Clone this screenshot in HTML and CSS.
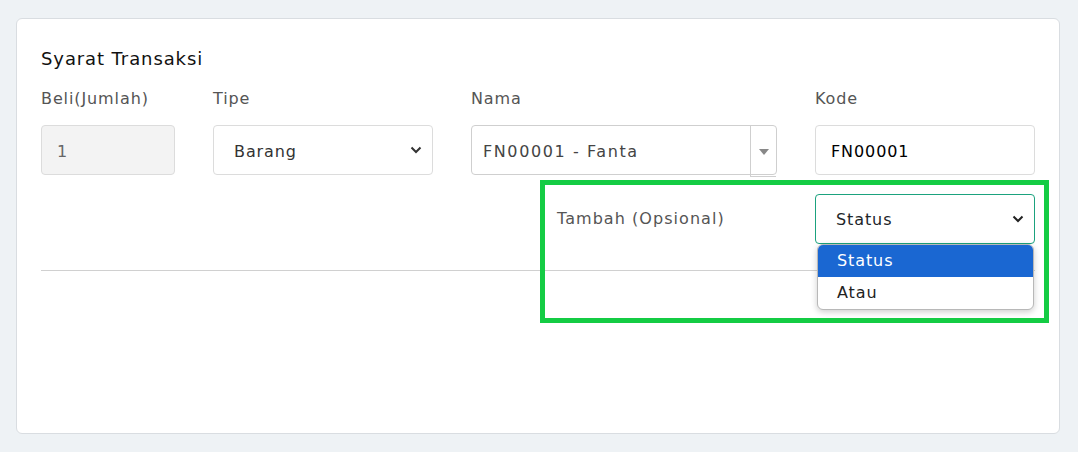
FILE: index.html
```html
<!DOCTYPE html>
<html lang="id">
<head>
<meta charset="utf-8">
<title>Syarat Transaksi</title>
<link rel="stylesheet" href="styles.css">
</head>
<body>
<div class="page">
  <div class="card">
    <h2 class="title">Syarat Transaksi</h2>
    <div class="fields">
      <div class="field">
        <div class="label">Beli(Jumlah)</div>
        <div class="control disabled">1</div>
      </div>
      <div class="field">
        <div class="label">Tipe</div>
        <div class="control select">
          <span class="value">Barang</span>
          <svg class="chev" width="12" height="8" viewBox="0 0 12 8"><path d="M1.5 1.5 L6 6 L10.5 1.5" fill="none" stroke="#333" stroke-width="2"/></svg>
        </div>
      </div>
      <div class="field">
        <div class="label">Nama</div>
        <div class="control select2">
          <span class="value">FN00001 - Fanta</span>
          <span class="s2arrow"><svg width="10" height="6" viewBox="0 0 10 6"><path d="M0 0 H10 L5 6 Z" fill="#888"/></svg></span>
        </div>
      </div>
      <div class="field">
        <div class="label">Kode</div>
        <div class="control code">FN00001</div>
      </div>
    </div>
    <div class="extra">
      <div class="extra-label">Tambah (Opsional)</div>
      <div class="extra-select">
        <div class="control select focus">
          <span class="value">Status</span>
          <svg class="chev" width="12" height="8" viewBox="0 0 12 8"><path d="M1.5 1.5 L6 6 L10.5 1.5" fill="none" stroke="#222" stroke-width="2"/></svg>
        </div>
        <ul class="dropdown">
          <li class="opt active">Status</li>
          <li class="opt">Atau</li>
        </ul>
      </div>
    </div>
    <hr class="divider">
  </div>
  <div class="highlight"></div>
</div>
</body>
</html>
```
FILE: styles.css
```css
* { box-sizing: border-box; }
html, body { margin: 0; padding: 0; }
body {
  background: #eef2f5;
  font-family: "DejaVu Sans", "Open Sans", sans-serif;
  width: 1078px;
  height: 452px;
  overflow: hidden;
}
.page { position: relative; padding: 18px 18px 0 16px; }
.card {
  background: #fff;
  border: 1px solid #d9dde1;
  border-radius: 6px;
  height: 416px;
  padding: 28px 24px 0 24px;
}
.title {
  margin: 0 0 16px 0;
  font-size: 18px;
  line-height: 24px;
  font-weight: normal;
  color: #111;
  letter-spacing: 0.9px;
}
.fields {
  display: grid;
  grid-template-columns: 134px 220px 306px 220px;
  column-gap: 38px;
}
.label {
  font-size: 16px;
  line-height: 24px;
  color: #555;
  margin-bottom: 14px;
  letter-spacing: 0.9px;
}
.control {
  height: 50px;
  border: 1px solid #dcdcdc;
  border-radius: 4px;
  display: flex;
  align-items: center;
  font-size: 16px;
  letter-spacing: 0.9px;
  background: #fff;
  padding-top: 2px;
}
.control.disabled {
  background: #f3f3f3;
  color: #666;
  padding-left: 15px;
}
.control.select {
  padding: 2px 10px 0 20px;
  justify-content: space-between;
  color: #333;
}
.control.select .chev { margin-top: -2px; }
.control.select2 {
  border-color: #cfcfcf;
  color: #444;
  padding-left: 11px;
  padding-top: 2px;
  justify-content: space-between;
  position: relative;
  letter-spacing: 1.6px;
}
.s2arrow {
  align-self: stretch;
  width: 26px;
  margin-top: -3px;
  margin-bottom: -3px;
  border-left: 1px solid #cfcfcf;
  border-bottom: 1px solid #cfcfcf;
  display: flex;
  align-items: center;
  justify-content: center;
  padding-top: 2px;
}
.control.code {
  color: #000;
  padding-left: 15px;
}
.extra {
  display: flex;
  justify-content: flex-end;
  margin-top: 19px;
}
.extra-label {
  width: 258px;
  font-size: 16px;
  line-height: 50px;
  color: #555;
  letter-spacing: 1.05px;
}
.extra-select { width: 220px; position: relative; }
.control.select.focus {
  border-color: #1ba27e;
  color: #212529;
  padding-top: 0;
}
.control.select.focus .chev { margin-top: 0; }
.dropdown {
  position: absolute;
  left: 2px;
  right: 1px;
  top: 50px;
  margin: 0;
  padding: 0;
  list-style: none;
  background: #fff;
  border: 1px solid #b8b8b8;
  border-radius: 6px;
  overflow: hidden;
  box-shadow: 0 2px 6px rgba(0,0,0,0.2);
  z-index: 2;
}
.opt {
  height: 32px;
  line-height: 32px;
  padding-left: 19px;
  font-size: 16px;
  color: #222;
  letter-spacing: 0.9px;
}
.opt.active { background: #1a67d2; color: #fff; }
.divider {
  margin: 26px 0 0 0;
  border: 0;
  border-top: 1px solid #d0d0d0;
}
.highlight {
  position: absolute;
  left: 540px;
  top: 180px;
  width: 509px;
  height: 143px;
  border: 5px solid #14cc44;
  pointer-events: none;
  z-index: 3;
}
```
